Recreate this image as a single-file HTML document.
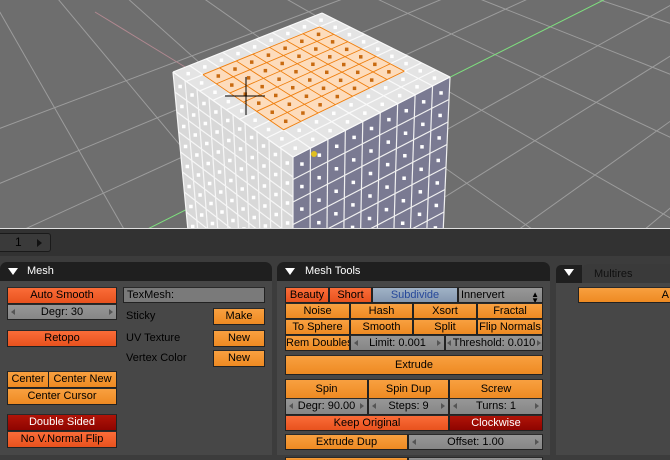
<!DOCTYPE html>
<html><head><meta charset="utf-8">
<style>
*{margin:0;padding:0;box-sizing:border-box}
html,body{width:670px;height:460px;overflow:hidden}
body{background:#3c3c3c;font-family:"Liberation Sans",sans-serif;font-size:11px;position:relative}
.a{position:absolute}
.b{position:absolute;text-align:center;line-height:15px;color:#000;border:1px solid #222;border-top-color:#2a2a2a;white-space:nowrap;overflow:hidden}
.o{background:linear-gradient(#f8a040,#ee8a22)}
.r{background:linear-gradient(#fa6c38,#e8521e)}
.d{background:linear-gradient(#b01408,#8e0400);color:#fff}
.g{background:linear-gradient(#979797,#868686)}
.bl{background:linear-gradient(#a0b2c6,#8598b0);color:#26489a}
.hd{position:absolute;height:19px;background:#1f1f1f;border-radius:7px 7px 0 0;color:#fff;font-size:11px;line-height:19px}
.bd{position:absolute;background:#474747}
.lb{position:absolute;color:#000;line-height:15px}
.tri{position:absolute;width:0;height:0;border-left:5px solid transparent;border-right:5px solid transparent;border-top:7px solid #fff}
.la,.ra{position:absolute;top:4px;width:0;height:0;border-top:3px solid transparent;border-bottom:3px solid transparent}
.la{left:3px;border-right:4px solid #555}
.ra{right:3px;border-left:4px solid #555}
</style></head><body>
<svg class="a" style="left:0;top:0" width="670" height="229">
<defs><clipPath id="c"><rect width="670" height="228"/></clipPath></defs>
<rect width="670" height="228" fill="#6e6e6e"/>
<g id="grid" clip-path="url(#c)" stroke="#9c9c9c" stroke-width="1" fill="none"></g>
<g id="cube" clip-path="url(#c)"></g>
<rect y="228" width="670" height="1" fill="#e0e0e0"/>
</svg>
<div class="a" style="left:0;top:229px;width:670px;height:27px;background:#323232"></div>
<div class="a" style="left:0;top:233px;width:51px;height:19px;border:1px solid #1a1a1a;border-left:none;border-radius:0 3px 3px 0;background:#3a3a3a;color:#000;line-height:17px;font-size:12px"><span style="position:absolute;left:15px">1</span><span style="position:absolute;left:37px;top:5px;border-top:4px solid transparent;border-bottom:4px solid transparent;border-left:5px solid #111"></span></div>

<div class="hd" style="left:0;top:262px;width:272px"><span style="position:absolute;left:27px">Mesh</span></div>
<div class="tri" style="left:8px;top:268px"></div>
<div class="bd" style="left:0;top:281px;width:272px;height:174px"></div>
<div class="b r" style="left:7px;top:287px;width:110px;height:17px">Auto Smooth</div>
<div class="b g" style="left:7px;top:304px;width:110px;height:16px">Degr: 30<i class="la"></i><i class="ra"></i></div>
<div class="b r" style="left:7px;top:330px;width:110px;height:17px">Retopo</div>
<div class="b o" style="left:7px;top:371px;width:42px;height:17px">Center</div>
<div class="b o" style="left:48px;top:371px;width:69px;height:17px">Center New</div>
<div class="b o" style="left:7px;top:388px;width:110px;height:17px">Center Cursor</div>
<div class="b d" style="left:7px;top:414px;width:110px;height:17px">Double Sided</div>
<div class="b r" style="left:7px;top:431px;width:110px;height:17px">No V.Normal Flip</div>
<div class="b" style="left:123px;top:287px;width:142px;height:16px;background:#7a7a7a;text-align:left;padding-left:3px">TexMesh:</div>
<div class="lb" style="left:126px;top:309px">Sticky</div>
<div class="lb" style="left:126px;top:331px">UV Texture</div>
<div class="lb" style="left:126px;top:351px">Vertex Color</div>
<div class="b o" style="left:213px;top:308px;width:52px;height:17px">Make</div>
<div class="b o" style="left:213px;top:330px;width:52px;height:17px">New</div>
<div class="b o" style="left:213px;top:350px;width:52px;height:17px">New</div>

<div class="hd" style="left:277px;top:262px;width:273px"><span style="position:absolute;left:28px">Mesh Tools</span></div>
<div class="tri" style="left:285px;top:268px"></div>
<div class="bd" style="left:277px;top:281px;width:273px;height:174px"></div>
<div class="b r" style="left:285px;top:287px;width:44px;height:16px">Beauty</div>
<div class="b r" style="left:329px;top:287px;width:43px;height:16px">Short</div>
<div class="b bl" style="left:372px;top:287px;width:86px;height:16px">Subdivide</div>
<div class="b g" style="left:458px;top:287px;width:85px;height:16px;text-align:left;padding-left:2px">Innervert<span style="position:absolute;right:3px;top:-1px;font-size:8px">&#9650;</span><span style="position:absolute;right:3px;top:5px;font-size:8px">&#9660;</span></div>
<div class="b o" style="left:285px;top:303px;width:65px;height:16px">Noise</div>
<div class="b o" style="left:350px;top:303px;width:63px;height:16px">Hash</div>
<div class="b o" style="left:413px;top:303px;width:64px;height:16px">Xsort</div>
<div class="b o" style="left:477px;top:303px;width:66px;height:16px">Fractal</div>
<div class="b o" style="left:285px;top:319px;width:65px;height:16px">To Sphere</div>
<div class="b o" style="left:350px;top:319px;width:63px;height:16px">Smooth</div>
<div class="b o" style="left:413px;top:319px;width:64px;height:16px">Split</div>
<div class="b o" style="left:477px;top:319px;width:66px;height:16px">Flip Normals</div>
<div class="b o" style="left:285px;top:335px;width:65px;height:16px">Rem Doubles</div>
<div class="b g" style="left:350px;top:335px;width:95px;height:16px">Limit: 0.001<i class="la"></i><i class="ra"></i></div>
<div class="b g" style="left:445px;top:335px;width:98px;height:16px">Threshold: 0.010<i class="la" style="left:1px"></i><i class="ra" style="right:1px"></i></div>
<div class="b o" style="left:285px;top:355px;width:258px;height:20px;line-height:18px">Extrude</div>
<div class="b o" style="left:285px;top:379px;width:83px;height:20px;line-height:18px">Spin</div>
<div class="b o" style="left:368px;top:379px;width:81px;height:20px;line-height:18px">Spin Dup</div>
<div class="b o" style="left:449px;top:379px;width:94px;height:20px;line-height:18px">Screw</div>
<div class="b g" style="left:285px;top:398px;width:83px;height:17px">Degr: 90.00<i class="la"></i><i class="ra"></i></div>
<div class="b g" style="left:368px;top:398px;width:81px;height:17px">Steps: 9<i class="la"></i><i class="ra"></i></div>
<div class="b g" style="left:449px;top:398px;width:94px;height:17px">Turns: 1<i class="la"></i><i class="ra"></i></div>
<div class="b r" style="left:285px;top:415px;width:164px;height:16px">Keep Original</div>
<div class="b d" style="left:449px;top:415px;width:94px;height:16px">Clockwise</div>
<div class="b o" style="left:285px;top:434px;width:123px;height:16px">Extrude Dup</div>
<div class="b g" style="left:408px;top:434px;width:135px;height:16px">Offset: 1.00<i class="la"></i><i class="ra"></i></div>
<div class="b o" style="left:285px;top:457px;width:123px;height:3px;border-bottom:none"></div>
<div class="b g" style="left:408px;top:457px;width:135px;height:3px;border-bottom:none"></div>

<div class="hd" style="left:556px;top:265px;width:26px;border-radius:5px 0 0 0"></div>
<div class="tri" style="left:564px;top:269px"></div>
<div class="hd" style="left:582px;top:264px;width:88px;background:#3a3a3a;color:#111;border-radius:7px 0 0 0"><span style="position:absolute;left:12px;top:1px">Multires</span></div>
<div class="bd" style="left:556px;top:283px;width:114px;height:172px"></div>
<div class="b o" style="left:578px;top:287px;width:92px;height:16px;border-right:none;text-align:right;padding-right:1px">A</div>

<script>
var N="http://www.w3.org/2000/svg";
function el(p,t,a){var e=document.createElementNS(N,t);for(var k in a)e.setAttribute(k,a[k]);p.appendChild(e);return e;}
var g=document.getElementById('grid');
[-130,100,336,560,800,1060,1340,1650,2000,2400].forEach(function(x){el(g,'line',{x1:-150,y1:-250,x2:x,y2:600});});
[-1250,-1000,-786,-591,-400,-200,0,200,420,650,900].forEach(function(x){el(g,'line',{x1:1400,y1:-400,x2:x,y2:600,stroke:x==-591?'#7ee07e':'#9c9c9c'});});
el(g,'line',{x1:95,y1:12,x2:190,y2:70,stroke:'#b08890'});
var c=document.getElementById('cube');
function bil(P,u,v){var A=P[0],B=P[1],C=P[2],D=P[3];return[(1-u)*(1-v)*A[0]+u*(1-v)*D[0]+u*v*C[0]+(1-u)*v*B[0],(1-u)*(1-v)*A[1]+u*(1-v)*D[1]+u*v*C[1]+(1-u)*v*B[1]];}
function face(P,nu,nv,fill,line,dot,sel){
 el(c,'polygon',{points:P.map(function(p){return p.join(',')}).join(' '),fill:fill});
 if(sel){var s=sel,q=[bil(P,s[0],s[2]),bil(P,s[0],s[3]),bil(P,s[1],s[3]),bil(P,s[1],s[2])];
  el(c,'polygon',{points:q.map(function(p){return p.join(',')}).join(' '),fill:'#fddcbc'});}
 for(var i=0;i<=nu;i++){var a=bil(P,i/nu,0),b=bil(P,i/nu,1);el(c,'line',{x1:a[0],y1:a[1],x2:b[0],y2:b[1],stroke:line,'stroke-width':1.2});}
 for(var j=0;j<=nv;j++){var a=bil(P,0,j/nv),b=bil(P,1,j/nv);el(c,'line',{x1:a[0],y1:a[1],x2:b[0],y2:b[1],stroke:line,'stroke-width':1.2});}
 if(sel){for(var i=Math.round(sel[0]*nu);i<=Math.round(sel[1]*nu);i++){var a=bil(P,i/nu,sel[2]),b=bil(P,i/nu,sel[3]);el(c,'line',{x1:a[0],y1:a[1],x2:b[0],y2:b[1],stroke:'#f08010'});}
  for(var j=Math.round(sel[2]*nv);j<=Math.round(sel[3]*nv);j++){var a=bil(P,sel[0],j/nv),b=bil(P,sel[1],j/nv);el(c,'line',{x1:a[0],y1:a[1],x2:b[0],y2:b[1],stroke:'#f08010'});}}
 for(var i=0;i<nu;i++)for(var j=0;j<nv;j++){var u=(i+.5)/nu,v=(j+.5)/nv,p=bil(P,u,v);
  var ins=sel&&u>sel[0]&&u<sel[1]&&v>sel[2]&&v<sel[3];
  el(c,'rect',{x:p[0]-1.5,y:p[1]-1.5,width:3.5,height:3.5,fill:ins?'#c86a10':dot});}
}
face([[173,72],[293,157],[293,337],[190,252]],9,10,'#d8d8d8','#f6f6f6','#fff');
face([[293,157],[450,77],[442,257],[293,337]],8,9,'#7a7a92','#f0f0f0','#fff');
face([[173,72],[322,13],[450,77],[293,157]],9,9,'#e4e4e4','#fafafa','#fff',[1/9,7/9,1/9,8/9]);
el(c,'circle',{cx:314,cy:154,r:3,fill:'#e0c020'});
el(c,'line',{x1:246,y1:77,x2:246,y2:115,stroke:'#000'});
el(c,'line',{x1:225,y1:96,x2:265,y2:96,stroke:'#000'});
</script>
</body></html>
